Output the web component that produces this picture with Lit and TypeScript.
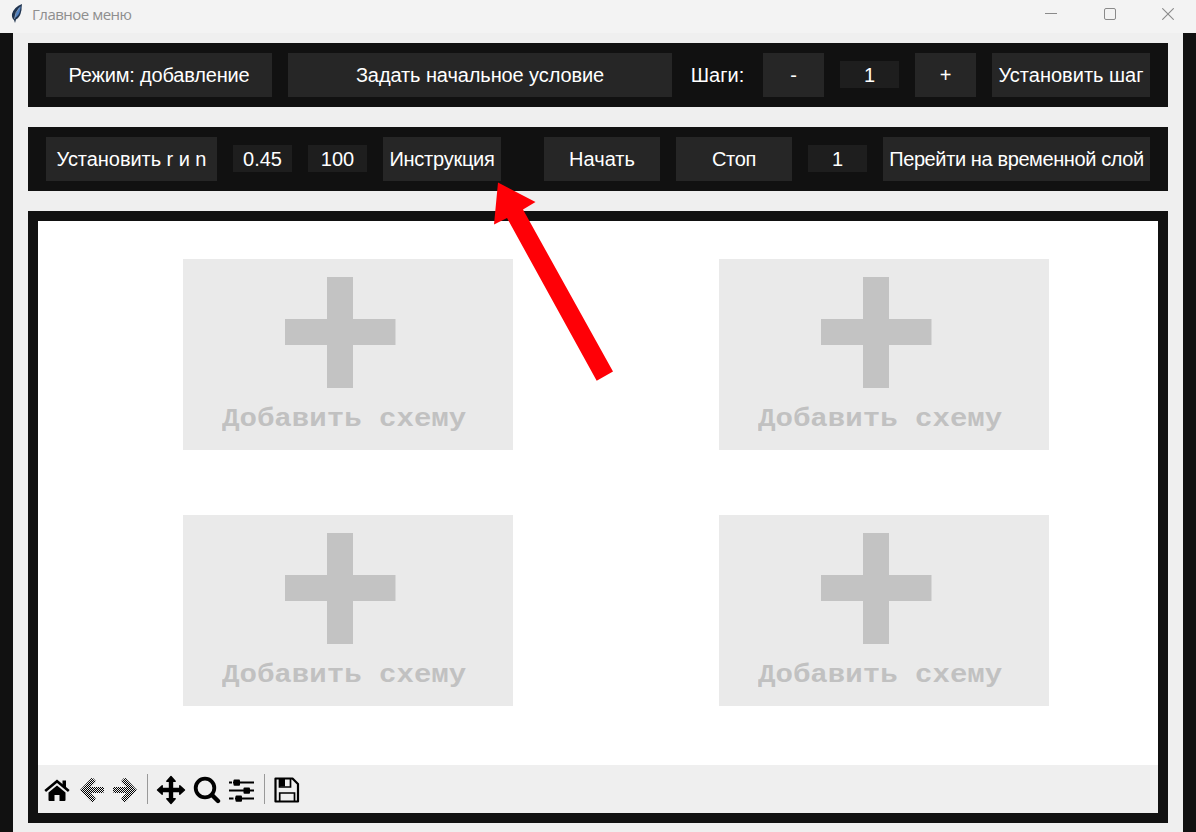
import { LitElement, html, css, svg } from "lit";
import { customElement, property } from "lit/decorators.js";

@customElement("scheme-card")
class SchemeCard extends LitElement {
  static styles = css`
    :host { display: block; background: #eaeaea; width: 330px; height: 191px; }
    .plus { display: block; margin: 0 0 0 101.5px; padding-top: 18px; }
    .caption {
      font: bold 25px/30px "Liberation Mono", "Courier New", monospace;
      color: #c1c1c1; white-space: pre; margin: 17px 0 0 38.500px; width: 210px;
      transform: scaleX(1.163); transform-origin: 0 0;
    }
  `;
  render() {
    return html`
      <svg class="plus" width="111" height="111" viewBox="0 0 111 111">
        <path fill="#c3c3c3" d="M42 0H68V42H110.500V68H68V111H42V68H0V42H42Z" />
      </svg>
      <div class="caption">Добавить схему</div>
    `;
  }
}

@customElement("tk-button")
class TkButton extends LitElement {
  @property() label = "";
  @property({ type: Number }) spacing = 0;
  static styles = css`
    :host { display: block; height: 44px; background: #262626; flex: none; }
    .text {
      height: 44px; display: flex; align-items: center; justify-content: center;
      font: 20px "Liberation Sans", Arial, sans-serif; color: #fff; white-space: pre;
    }
  `;
  render() {
    return html`<div class="text" style="letter-spacing:${this.spacing}px">${this.label}</div>`;
  }
}

const home = svg`<svg width="26" height="24" viewBox="0 0 26 24">
  <path d="M4.500 14.500 13 7.500 21.500 14.500V22Q21.500 23 20.500 23H15.500V17H10.500V23H5.500Q4.500 23 4.500 22Z"/>
  <path d="M1.200 13 13 3.200 24.800 13" fill="none" stroke="#000" stroke-width="2.600"/>
  <path d="M18.500 2.500H22V10L18.500 7Z"/></svg>`;
const arrow = (flip: boolean) => svg`<svg width="24" height="26" viewBox="0 0 24 26">
  <defs><pattern id="dots" width="2" height="2" patternUnits="userSpaceOnUse">
    <rect width="1" height="1"/><rect x="1" y="1" width="1" height="1"/></pattern></defs>
  <path fill="url(#dots)" transform=${flip ? "translate(24 0) scale(-1 1)" : ""}
   d="M0 13 11.500 1H13L15.500 3.500V5L10.500 10H23L24 11V15L23 16H10.500L15.500 21V22.500L13 25H11.500Z"/></svg>`;
const move = svg`<svg width="30" height="30" viewBox="0 0 30 30">
  <path stroke="#000" stroke-width="1.400" stroke-linejoin="round"
   d="M15 1.500 19.200 6.200H16.500V13.500H23.800V10.800L28.500 15 23.800 19.200V16.500H16.500V23.800H19.200L15 28.500 10.800 23.800H13.500V16.500H6.200V19.200L1.500 15 6.200 10.800V13.500H13.500V6.200H10.800Z"/></svg>`;
const search = svg`<svg width="28" height="28" viewBox="0 0 28 28" fill="none" stroke="#000">
  <circle cx="12" cy="12" r="9.300" stroke-width="3.800"/><path d="M19 19 25 25" stroke-width="4.400" stroke-linecap="round"/></svg>`;
const sliders = svg`<svg width="26" height="24" viewBox="0 0 26 24">
  <path fill="none" stroke="#000" stroke-width="2" d="M0 4.500H25M0 12.500H25M0 20.500H25"/>
  <path fill="none" stroke="#efefef" stroke-width="3" d="M3 4.500H4M4.500 20.500H6"/>
  <rect x="4.500" y="1.500" width="6.500" height="6.200" rx="1"/><rect x="14.500" y="9.500" width="6.500" height="6.200" rx="1"/><rect x="6.500" y="17.500" width="6.500" height="6.200" rx="1"/></svg>`;
const save = svg`<svg width="26" height="26" viewBox="0 0 26 26" fill="none" stroke="#000">
  <path stroke-width="2.200" stroke-linejoin="round" d="M1.500 1.500H18.500L24 7V24.500H1.500Z"/>
  <path stroke-width="1.700" d="M5.700 24V16H20.500V24M5.500 2V10H16.500V2"/><path fill="#000" stroke="none" d="M5.500 2H11V9.500H5.500Z"/></svg>`;

@customElement("app-root")
class AppRoot extends LitElement {
  static styles = css`
    :host { display: block; width: 1196px; height: 832px; overflow: hidden; position: relative; background: #efefef; }
    * { box-sizing: border-box; }
    svg { display: block; }
    .titlebar { height: 33px; background: #f3f3f3; display: flex; align-items: flex-start; padding: 4px 22px 0 10px; }
    .title { font: 15px/20px "Open Sans", "Noto Sans", sans-serif; letter-spacing: -0.5px; color: #8e8e8e; margin: 0 auto 0 8px; white-space: nowrap; }
    .controls { display: flex; gap: 46.5px; padding-top: 4px; }
    .body { height: 799px; border: solid #111; border-width: 0 13px; padding: 10px 15px 0; background: #efefef; }
    .bar { height: 64px; background: #111; display: flex; align-items: center; gap: 16px; padding: 0 18px; margin-bottom: 20px; }
    .cell { width: 59px; height: 27px; margin-top: -1px; flex: none; text-align: center; font: 20px/28px "Liberation Sans", Arial, sans-serif; color: #fff; }
    .entry { background: #1e1e1e; }
    .w226 { width: 226px; } .w384 { width: 384px; } .w61 { width: 61px; } .w158 { width: 158px; }
    .w171 { width: 171px; } .w118 { width: 118px; } .w116 { width: 116px; } .w267 { width: 267px; }
    .push { margin-left: auto; }
    .plot { height: 612px; border: 10px solid #111; background: #fff; display: flex; flex-direction: column; }
    .grid { height: 544px; display: grid; grid-template-columns: 330px 330px; grid-template-rows: 191px 191px; gap: 65px 206px; padding: 38px 0 0 145px; }
    .tools { height: 48px; background: #efefef; display: flex; align-items: center; padding: 2px 0 0 6px; }
    .sep { width: 1px; height: 30px; background: #999; margin-top: -2px; }
    .m9 { margin-left: 9px; } .m10 { margin-left: 10px; } .m8 { margin-left: 8px; } .m7 { margin-left: 7px; }
    .pointer { position: absolute; left: 490px; top: 180px; }
  `;
  render() {
    return html`
      <div class="titlebar">
        <svg width="14" height="20" viewBox="0 0 14 20">
          <path fill="#20344f" d="M12 0Q4 3 2 10 1.500 14 4 16L5 19 6 15.500Q10 14 11.500 6 11.500 3 12 0Z"/>
          <path fill="#4d7fc0" d="M10.800 2Q6 7 4.500 14 9 12 10.200 6Z"/>
          <path fill="none" stroke="#9dacbd" stroke-width=".7" d="M9.500 3.500Q5 8 4.500 15"/>
        </svg>
        <div class="title">Главное меню</div>
        <div class="controls">
          <svg width="12" height="12"><path stroke="#8a8a8a" d="M0 5.500H12"/></svg>
          <svg width="12" height="12"><rect x=".5" y=".5" width="11" height="11" rx="1.500" fill="none" stroke="#8a8a8a"/></svg>
          <svg width="12" height="12"><path stroke="#8a8a8a" stroke-width="1.100" d="M.3.3 11.700 11.700M11.700.3.3 11.700"/></svg>
        </div>
      </div>
      <div class="body">
        <div class="bar">
          <tk-button class="w226" label="Режим: добавление" spacing="-0.18"></tk-button>
          <tk-button class="w384" label="Задать начальное условие" spacing="-0.1"></tk-button>
          <div class="cell">Шаги:</div>
          <tk-button class="w61" label="-"></tk-button>
          <div class="cell entry">1</div>
          <tk-button class="w61" label="+"></tk-button>
          <tk-button class="w158" label="Установить шаг"></tk-button>
        </div>
        <div class="bar">
          <tk-button class="w171" label="Установить r и n" spacing="-0.05"></tk-button>
          <div class="cell entry">0.45</div>
          <div class="cell entry">100</div>
          <tk-button class="w118" label="Инструкция" spacing="-0.25"></tk-button>
          <tk-button class="w116 push" label="Начать"></tk-button>
          <tk-button class="w116" label="Стоп" spacing="-0.3"></tk-button>
          <div class="cell entry">1</div>
          <tk-button class="w267" label="Перейти на временной слой" spacing="-0.39"></tk-button>
        </div>
        <div class="plot">
          <div class="grid">
            <scheme-card></scheme-card><scheme-card></scheme-card>
            <scheme-card></scheme-card><scheme-card></scheme-card>
          </div>
          <div class="tools">
            ${home}
            <div class="m10">${arrow(false)}</div>
            <div class="m9">${arrow(true)}</div>
            <div class="sep m10"></div>
            <div class="m8">${move}</div>
            <div class="m7">${search}</div>
            <div class="m8">${sliders}</div>
            <div class="sep m9"></div>
            <div class="m9">${save}</div>
          </div>
        </div>
      </div>
      <svg class="pointer" width="130" height="205" viewBox="490 180 130 205">
        <path fill="#ff0006" d="M498 182.500 535.500 202 523 209.500 613 371.500 596.700 380.700 507 218 494 224.500Z"/>
      </svg>
    `;
  }
}
